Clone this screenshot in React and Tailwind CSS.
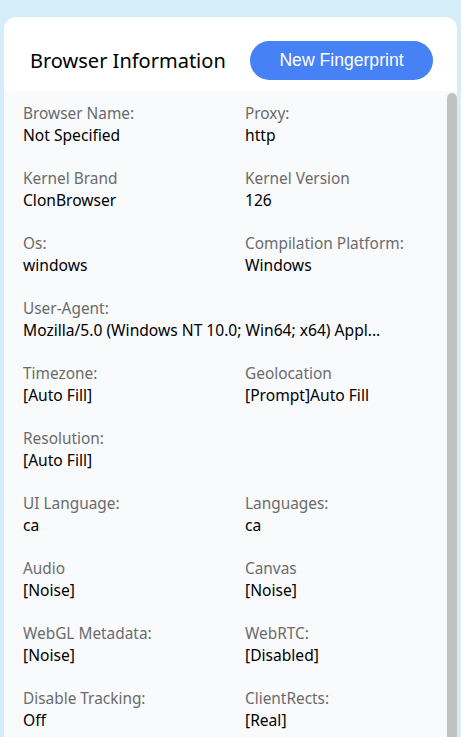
const fields = [
  [{ label: 'Browser Name:', value: 'Not Specified' }, { label: 'Proxy:', value: 'http' }],
  [{ label: 'Kernel Brand', value: 'ClonBrowser' }, { label: 'Kernel Version', value: '126' }],
  [{ label: 'Os:', value: 'windows' }, { label: 'Compilation Platform:', value: 'Windows' }],
  [{ label: 'User-Agent:', value: 'Mozilla/5.0 (Windows NT 10.0; Win64; x64) Appl...', wide: true }],
  [{ label: 'Timezone:', value: '[Auto Fill]' }, { label: 'Geolocation', value: '[Prompt]Auto Fill' }],
  [{ label: 'Resolution:', value: '[Auto Fill]' }],
  [{ label: 'UI Language:', value: 'ca' }, { label: 'Languages:', value: 'ca' }],
  [{ label: 'Audio', value: '[Noise]' }, { label: 'Canvas', value: '[Noise]' }],
  [{ label: 'WebGL Metadata:', value: '[Noise]' }, { label: 'WebRTC:', value: '[Disabled]' }],
  [{ label: 'Disable Tracking:', value: 'Off' }, { label: 'ClientRects:', value: '[Real]' }],
];

function Field({ label, value, wide }) {
  return (
    <div className={wide ? 'col-span-2' : ''}>
      <div className="text-[15.4px] leading-[21px] text-[#6b6b6b]">{label}</div>
      <div className="text-[15.6px] leading-[22px] text-black whitespace-nowrap">{value}</div>
    </div>
  );
}

export default function App() {
  return (
    <div
      className="h-[737px] overflow-hidden bg-[#d5ecf9] pl-[4px] pr-[4px] pt-[17px]"
      style={{ fontFamily: '"Noto Sans", "Open Sans", sans-serif' }}
    >
      <div className="h-[720px] rounded-t-[12px] bg-white flex flex-col overflow-hidden">
        {/* header */}
        <div className="flex items-center justify-between h-[74px] pt-[13px] pl-[26px] pr-[24px] shrink-0">
          <h1 className="text-[20px] text-black">Browser Information</h1>
          <button
            className="h-[39px] w-[183px] rounded-full bg-[#4681f6] text-white text-[17.6px]"
            style={{ fontFamily: '"Liberation Sans", Arial, sans-serif' }}
          >
            New Fingerprint
          </button>
        </div>

        {/* body */}
        <div className="flex flex-1 bg-[#f8fafc]">
          <div className="flex-1 pl-[19px] pt-[12px]">
            {fields.map((row, i) => (
              <div key={i} className="grid grid-cols-[222px_1fr] h-[65px]">
                {row.map((f) => (
                  <Field key={f.label} {...f} />
                ))}
              </div>
            ))}
          </div>
          <div className="w-[10px] pt-[2px]">
            <div className="h-full rounded-t-[5px] bg-[#c1c1c1]" />
          </div>
        </div>
      </div>
    </div>
  );
}
